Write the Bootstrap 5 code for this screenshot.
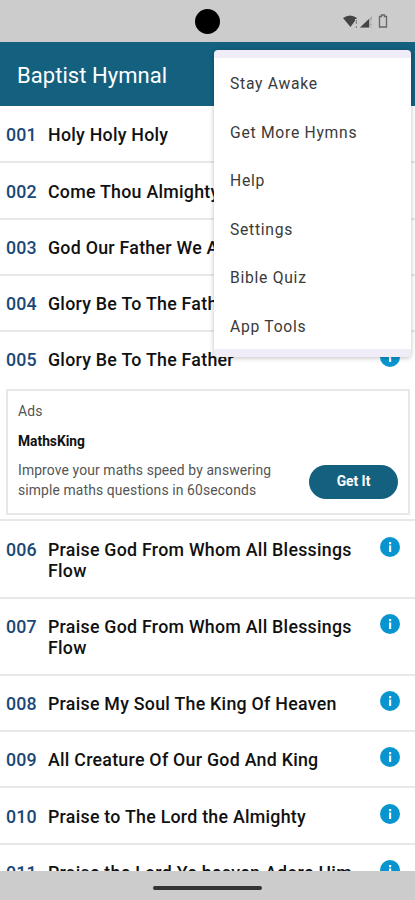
<!DOCTYPE html>
<html lang="en">
<head>
<meta charset="utf-8">
<meta name="viewport" content="width=device-width, initial-scale=1">
<title>Baptist Hymnal</title>
<link rel="stylesheet" href="https://cdn.jsdelivr.net/npm/bootstrap@5.3.0/dist/css/bootstrap.min.css">
<style>
body{font-family:Roboto,"Liberation Sans",sans-serif;height:900px;color:#111}
.status-bar{height:42px;background:#ccc}
.camera{width:25px;height:25px;background:#000}
.status-icons{left:343px;top:13px}
.app-bar{height:64px;background:#13607f;padding:4px 17px 0}
.app-title{font-size:22px;line-height:28px;letter-spacing:.05px}
.hymn-list{min-height:0;padding-top:1px}
.hymn{padding:17.25px 15px 16px 6px;border-bottom:2px solid #e8e8e8;font-size:17.8px;line-height:21px;font-weight:500}
.hymn-no{width:42px;color:#1a4777;letter-spacing:.1px}
.hymn-title{letter-spacing:.26px;padding-right:20px}
.info{width:20px;height:20px;margin-top:-2px}
.hymn-open{border-bottom:0}
.ad-wrap{padding:3px 5px 4px 6px;border-bottom:2px solid #e8e8e8}
.ad-box{border:2px solid #e8e8e8;height:126px;padding:11px 10px 0}
.ad-text{font-size:13.9px;line-height:19.5px;color:#555;letter-spacing:.12px}
.ad-name{font-size:13.8px;line-height:20px;color:#111;padding-top:9px}
.ad-copy{padding-top:2.5px}
.get-btn{width:89px;height:34px;background:#13607f;font-size:13.8px;margin-top:6px}
.overflow-menu{left:214px;top:50px;width:197px;height:307px;background:#fff;border-top:8px solid #f1edf8;border-bottom:8px solid #f1edf8;border-radius:4px;box-shadow:0 1px 5px rgba(0,0,0,.25)}
.menu-row{height:48.5px;padding:3.5px 0 0 16px;font-size:15.7px;letter-spacing:.72px;color:#3a3a3a}
.nav-bar{height:29px;background:#ccc}
.handle{width:109px;height:4px;background:#333;margin-top:5px}
</style>
</head>
<body class="bg-white overflow-hidden position-relative d-flex flex-column">
<svg class="d-none"><symbol id="info" viewBox="0 0 20 20"><circle cx="10" cy="10" r="10" fill="#0895cf"/><path d="M9 5h2.200v2.200H9zM9 8.500h2.200v6.500H9z" fill="#fff"/></symbol></svg>
<header class="status-bar flex-shrink-0 d-flex align-items-center justify-content-center">
<div class="camera rounded-circle"></div>
<svg class="status-icons position-absolute" width="46" height="16" viewBox="0 0 46 16"><path d="M0 5Q7 0 14 5L7.500 14z" fill="#444"/><path d="M12 6h3v9h-3z" fill="#ccc"/><path d="M13.300 7v4M13.300 13v2" stroke="#777"/><path d="M17 14.500L29 3V14.500z" fill="#aaa"/><path d="M17 14.500L26 6V14.500z" fill="#444"/><path d="M28 7v4M28 12v2" stroke="#ccc" stroke-width="1.500"/><path d="M38.500 3.500v-1.500h3v1.500h2v10.500h-7v-10.500z" fill="none" stroke="#666" stroke-width="1.300"/></svg>
</header>
<nav class="app-bar flex-shrink-0 d-flex align-items-center text-white"><span class="app-title">Baptist Hymnal</span></nav>
<main class="hymn-list flex-fill overflow-hidden">
<div class="hymn d-flex"><span class="hymn-no flex-shrink-0">001</span><span class="hymn-title flex-fill">Holy Holy Holy</span><svg class="info flex-shrink-0"><use href="#info"/></svg></div>
<div class="hymn d-flex"><span class="hymn-no flex-shrink-0">002</span><span class="hymn-title flex-fill">Come Thou Almighty</span><svg class="info flex-shrink-0"><use href="#info"/></svg></div>
<div class="hymn d-flex"><span class="hymn-no flex-shrink-0">003</span><span class="hymn-title flex-fill">God Our Father We A</span><svg class="info flex-shrink-0"><use href="#info"/></svg></div>
<div class="hymn d-flex"><span class="hymn-no flex-shrink-0">004</span><span class="hymn-title flex-fill">Glory Be To The Fath</span><svg class="info flex-shrink-0"><use href="#info"/></svg></div>
<div class="hymn hymn-open d-flex"><span class="hymn-no flex-shrink-0">005</span><span class="hymn-title flex-fill">Glory Be To The Father</span><svg class="info flex-shrink-0"><use href="#info"/></svg></div>
<div class="ad-wrap"><div class="ad-box">
<div class="ad-text">Ads</div>
<div class="ad-name fw-bold">MathsKing</div>
<div class="d-flex justify-content-between align-items-start pt-2"><div class="ad-text ad-copy">Improve your maths speed by answering<br>simple maths questions in 60seconds</div><button class="get-btn btn rounded-pill border-0 text-white fw-bold p-0">Get It</button></div>
</div></div>
<div class="hymn d-flex"><span class="hymn-no flex-shrink-0">006</span><span class="hymn-title flex-fill">Praise God From Whom All Blessings Flow</span><svg class="info flex-shrink-0"><use href="#info"/></svg></div>
<div class="hymn d-flex"><span class="hymn-no flex-shrink-0">007</span><span class="hymn-title flex-fill">Praise God From Whom All Blessings Flow</span><svg class="info flex-shrink-0"><use href="#info"/></svg></div>
<div class="hymn d-flex"><span class="hymn-no flex-shrink-0">008</span><span class="hymn-title flex-fill">Praise My Soul The King Of Heaven</span><svg class="info flex-shrink-0"><use href="#info"/></svg></div>
<div class="hymn d-flex"><span class="hymn-no flex-shrink-0">009</span><span class="hymn-title flex-fill">All Creature Of Our God And King</span><svg class="info flex-shrink-0"><use href="#info"/></svg></div>
<div class="hymn d-flex"><span class="hymn-no flex-shrink-0">010</span><span class="hymn-title flex-fill">Praise to The Lord the Almighty</span><svg class="info flex-shrink-0"><use href="#info"/></svg></div>
<div class="hymn d-flex"><span class="hymn-no flex-shrink-0">011</span><span class="hymn-title flex-fill">Praise the Lord Ye heaven Adore Him</span><svg class="info flex-shrink-0"><use href="#info"/></svg></div>
</main>
<footer class="nav-bar flex-shrink-0 d-flex align-items-center justify-content-center"><div class="handle rounded-pill"></div></footer>
<div class="overflow-menu position-absolute">
<div class="menu-row d-flex align-items-center">Stay Awake</div>
<div class="menu-row d-flex align-items-center">Get More Hymns</div>
<div class="menu-row d-flex align-items-center">Help</div>
<div class="menu-row d-flex align-items-center">Settings</div>
<div class="menu-row d-flex align-items-center">Bible Quiz</div>
<div class="menu-row d-flex align-items-center">App Tools</div>
</div>
<script src="https://cdn.jsdelivr.net/npm/bootstrap@5.3.0/dist/js/bootstrap.bundle.min.js"></script>
</body>
</html>
